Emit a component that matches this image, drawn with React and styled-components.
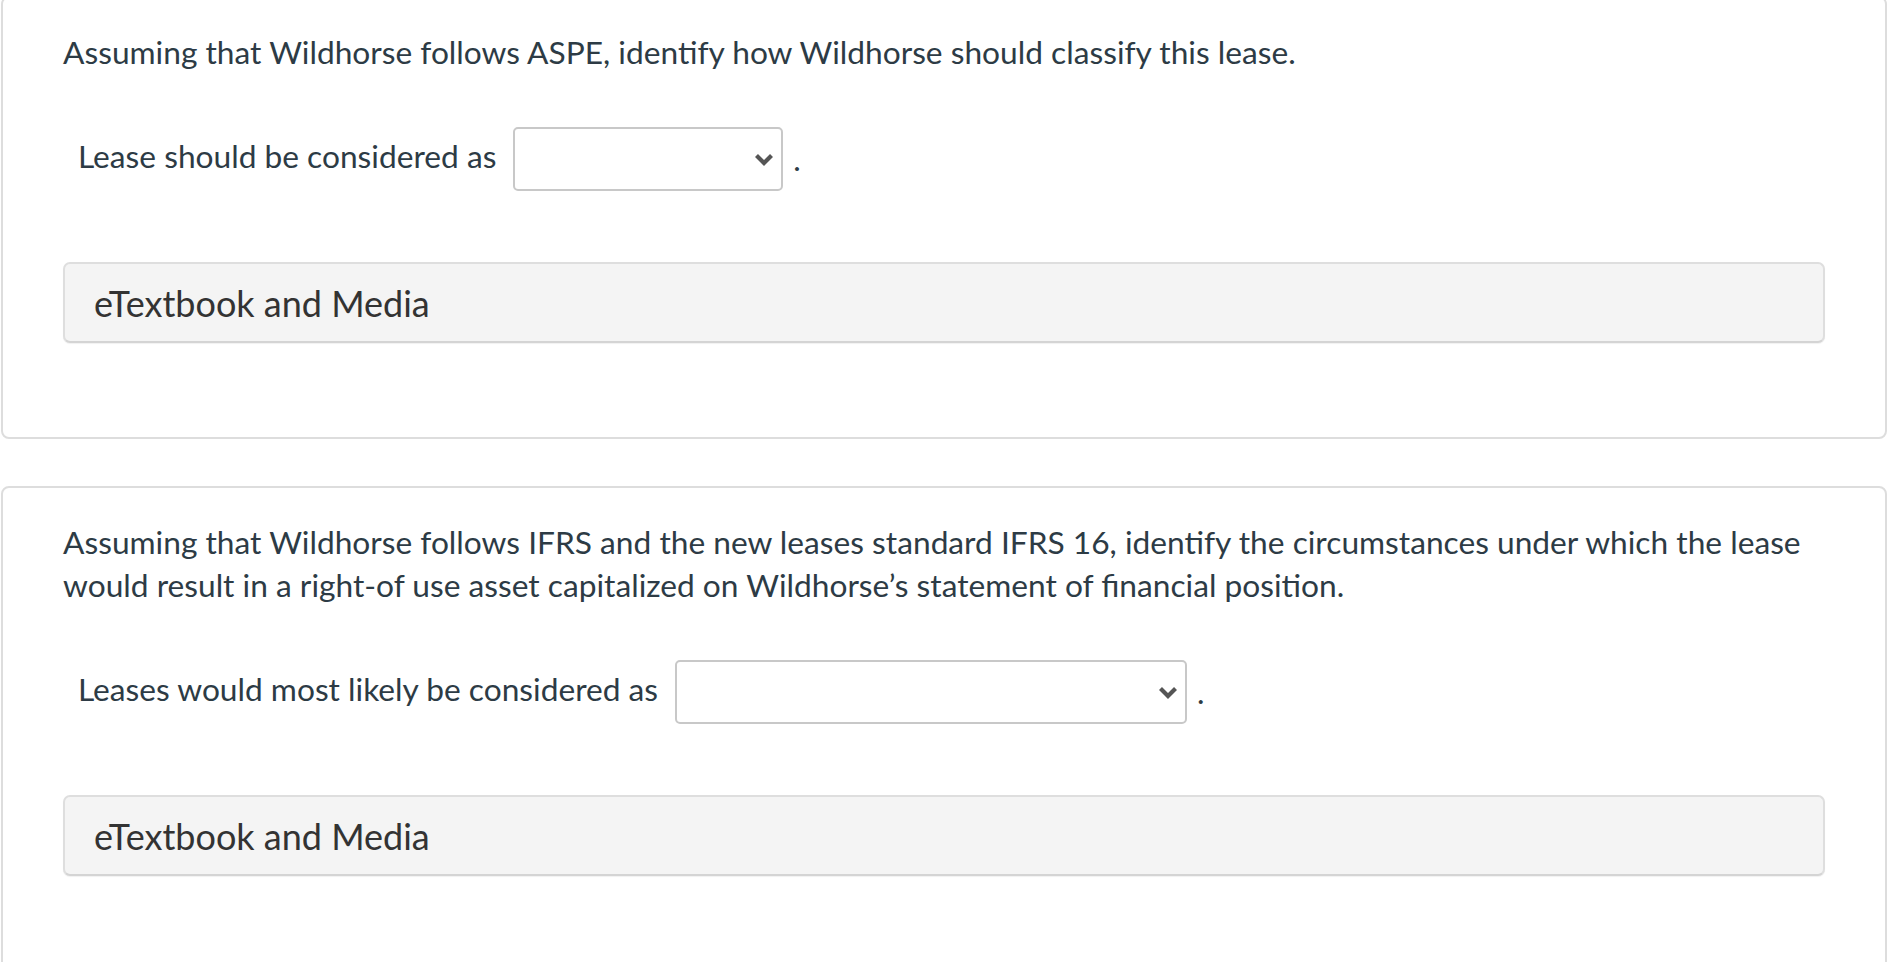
import styled, { createGlobalStyle } from "styled-components";

const GlobalStyle = createGlobalStyle`
  html, body {
    margin: 0;
    padding: 0;
    background: #ffffff;
  }
  body {
    font-family: Lato, "Open Sans", "Liberation Sans", sans-serif;
    overflow: hidden;
  }
`;

const Page = styled.div`
  display: flex;
  flex-direction: column;
  gap: 47px;
  margin-top: -4px;
  padding: 0 1px;
`;

const Card = styled.section`
  border: 2px solid #dddddd;
  border-radius: 8px;
  padding: 33px 60px 94px;
  background: #ffffff;
`;

const Question = styled.p`
  margin: 0 0 53px;
  font-size: 31.7px;
  line-height: 43px;
  color: #2d3b45;
`;

const AnswerRow = styled.div`
  display: flex;
  align-items: center;
  padding-left: 15px;
  margin-bottom: 71px;
  font-size: 31.7px;
  line-height: 43px;
  color: #2d3b45;
`;

const Label = styled.span`
  margin-right: 17px;
  position: relative;
  top: -3px;
`;

const SelectBox = styled.div`
  box-sizing: border-box;
  width: ${(p) => p.$width}px;
  height: 64px;
  border: 2px solid #c8c8c8;
  border-radius: 5px;
  background: #ffffff;
  display: flex;
  align-items: center;
  justify-content: flex-end;
  padding-right: 7px;
`;

const Period = styled.span`
  margin-left: 10px;
`;

const MediaBar = styled.div`
  box-sizing: border-box;
  height: 81px;
  display: flex;
  align-items: center;
  padding-left: 29px;
  background: #f4f4f4;
  border: 2px solid #dedede;
  border-bottom-color: #d4d4d4;
  border-radius: 7px;
  box-shadow: 0 1px 1px rgba(0, 0, 0, 0.06);
  font-size: 36px;
  color: #333333;
`;

const Chevron = () => (
  <svg width="20" height="13" viewBox="0 0 20 13">
    <polyline
      points="2.5,2.5 10,10 17.5,2.5"
      fill="none"
      stroke="#555555"
      strokeWidth="4.2"
    />
  </svg>
);

const QuestionCard = ({ question, label, selectWidth }) => (
  <Card>
    <Question>{question}</Question>
    <AnswerRow>
      <Label>{label}</Label>
      <SelectBox $width={selectWidth} role="combobox">
        <Chevron />
      </SelectBox>
      <Period>.</Period>
    </AnswerRow>
    <MediaBar>eTextbook and Media</MediaBar>
  </Card>
);

export default function App() {
  return (
    <>
      <GlobalStyle />
      <Page>
        <QuestionCard
          question="Assuming that Wildhorse follows ASPE, identify how Wildhorse should classify this lease."
          label="Lease should be considered as"
          selectWidth={270}
        />
        <QuestionCard
          question="Assuming that Wildhorse follows IFRS and the new leases standard IFRS 16, identify the circumstances under which the lease would result in a right-of use asset capitalized on Wildhorse’s statement of financial position."
          label="Leases would most likely be considered as"
          selectWidth={512}
        />
      </Page>
    </>
  );
}
